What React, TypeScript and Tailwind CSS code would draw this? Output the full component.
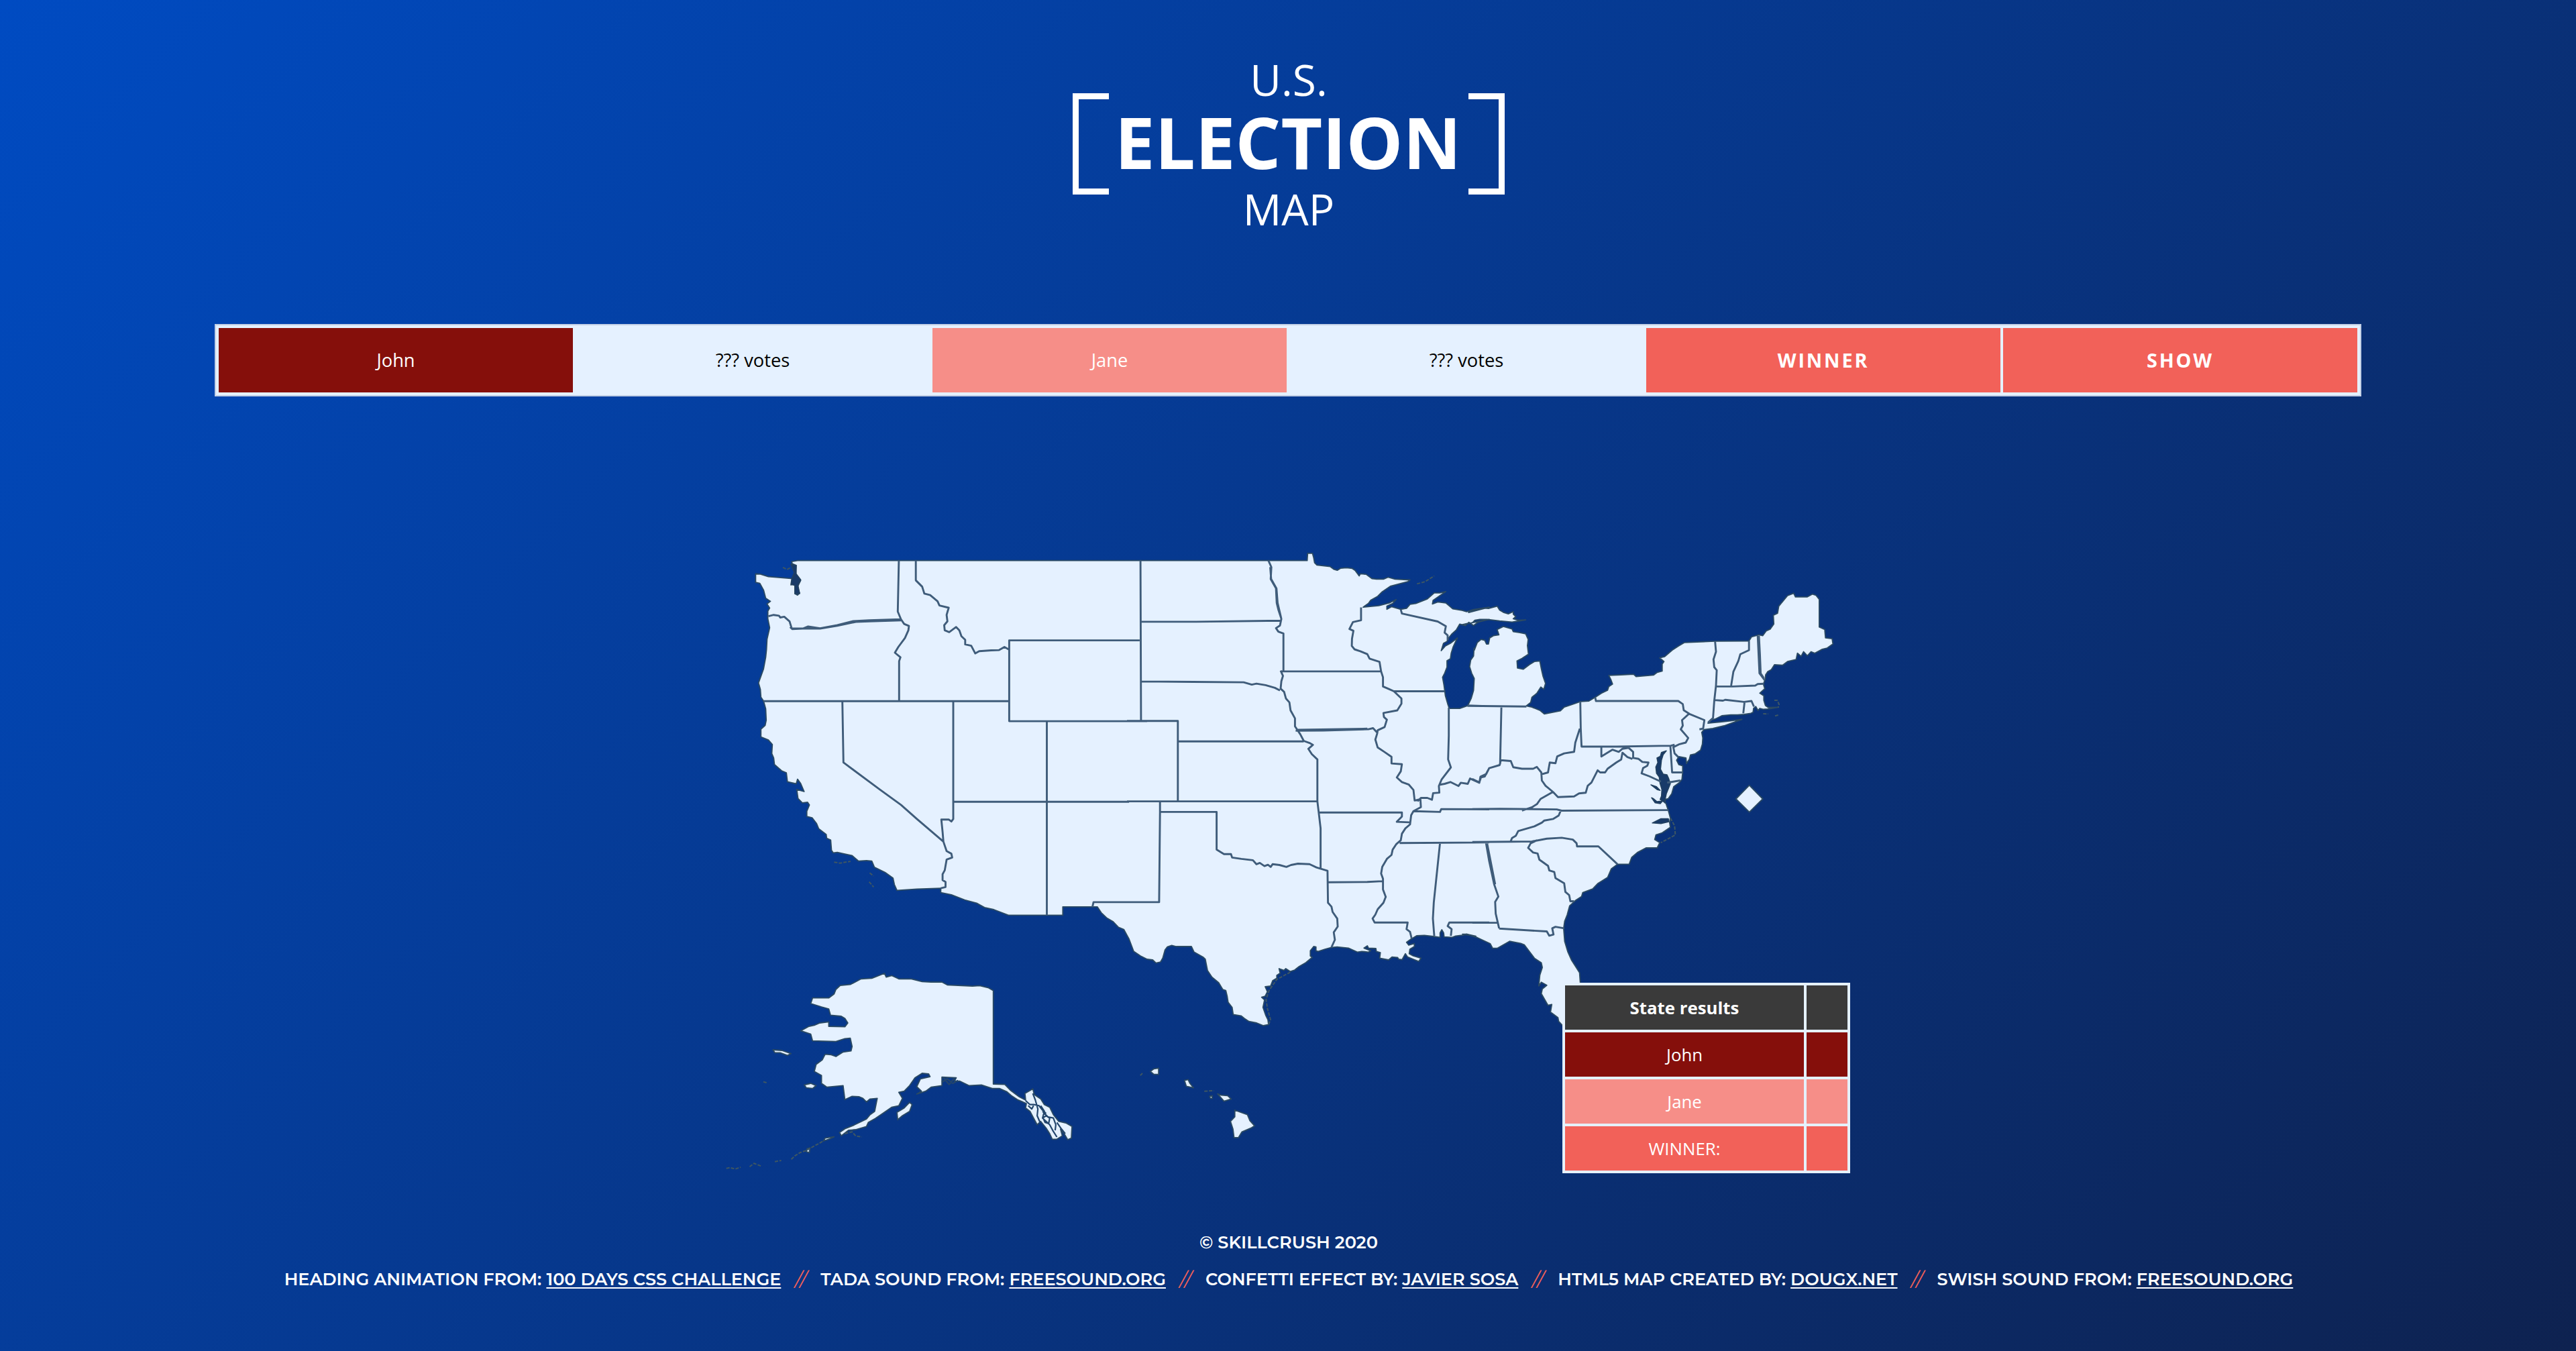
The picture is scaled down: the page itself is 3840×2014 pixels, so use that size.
import React from "react";

type Sheet = [number, number, number, number];

// Each sheet of the map has its own origin and scale: [x, y, x scale, y scale].
const WEST: Sheet = [1090, 800, 620 / 1568, 600 / 1568];
const MID: Sheet = [1680, 800, 540 / 1568, 620 / 1568];
const EAST: Sheet = [2180, 820, 580 / 1568, 720 / 1568];
const ISLES: Sheet = [1080, 1400, 840 / 1568, 1 / 3];
const GULF: Sheet = [1690, 1330, 1 / 3, 1 / 3];
const NORTHEAST: Sheet = [2380, 920, 1 / 3, 1 / 3];

function project([ox, oy, sx, sy]: Sheet, points: string): string {
  return points
    .trim()
    .split(/\s+/)
    .map((p) => {
      const [x, y] = p.split(",").map(Number);
      return `${(ox + x * sx).toFixed(1)},${(oy + y * sy).toFixed(1)}`;
    })
    .join(" ");
}

const mainland = [
  project(WEST, "228,97 250,93 1540,93"),
  project(
    MID,
    "60,90 780,90 782,63 803,63 808,80 812,98 822,107 880,113 895,123 910,127 925,119 950,117 975,120 988,128 1005,148 1010,140 1035,142 1060,158 1080,160 1110,160 1130,153 1160,160 1225,163 1215,170 1140,187 1105,208 1085,225 1055,240 1045,252 1022,266 1090,260 1135,250 1165,237 1150,252 1125,262 1125,274 1145,264 1185,274 1210,270 1225,255 1250,252 1300,235 1330,212 1355,212 1380,207 1345,228 1325,240 1322,254 1345,246 1380,250 1410,272 1450,278 1470,283 1500,275 1568,266",
  ),
  project(
    EAST,
    "25,203 30,197 60,192 85,188 105,190 140,182 150,195 165,202 185,207 205,200 205,208 215,216 205,223 225,228 255,227 215,232 200,234 150,230 100,225 70,225 50,228 40,236 20,238 0,242",
  ),
  project(
    MID,
    "1568,312 1540,318 1520,322 1500,335 1480,323 1465,335 1440,330 1425,352 1405,368 1392,382 1385,395 1370,402 1360,430 1378,412 1400,402 1430,382 1412,415 1403,440 1400,460 1385,468 1385,492 1375,515 1366,530 1372,560 1378,600 1388,630 1395,648 1440,648 1475,637 1490,610 1500,580 1503,535 1492,515 1483,490 1488,465 1500,450 1502,420",
  ),
  project(
    EAST,
    "48,325 60,300 75,290 90,293 97,305 105,305 110,285 125,278 147,275 140,258 165,248 200,256 205,265 232,268 255,272 265,290 262,310 266,338 240,352 220,360 222,383 245,387 270,372 290,362 312,360 318,385 325,410 335,433 328,452 316,445 300,465 280,478 275,495 258,506 280,510 312,520 330,532 395,522 410,510 440,502 475,492 510,490 535,478 560,465 585,455 590,443 605,435 598,420 590,407 640,405 690,403 700,411 770,406 785,397 805,393 805,370 812,362 795,350 815,346 845,325 870,312 895,300 1018,296 1155,295 1165,282 1195,275 1210,278 1225,262 1240,257 1255,240 1253,212 1270,205 1275,182 1310,148 1335,140 1342,152 1390,152 1410,143 1425,147 1438,160 1438,250 1460,258 1463,285 1490,288 1493,305 1470,318 1450,322 1420,335 1405,330 1390,343 1375,330 1365,345 1350,335 1345,355 1310,362 1290,374 1258,372 1245,388 1230,395 1222,405 1220,420",
  ),
  project(
    NORTHEAST,
    "752,282 746,300 752,320 730,340 748,352 748,372 755,395 768,404 812,403 765,411 745,412 730,408 722,418 712,400 702,408 700,425 690,430 660,435 630,437 600,437 560,441 530,456 510,460 498,474 520,472 560,468 600,464 650,457 615,470 570,486 520,498 480,503 470,515 475,540 473,568 465,595 440,612 420,616 415,635 402,655 400,630 368,624 358,640 368,660 385,665 385,695 382,725 370,740 345,758 336,790 320,812 308,815 305,830",
  ),
  project(
    EAST,
    "820,822 830,846 838,870 835,885 838,900 805,918 780,925 775,940 795,950 785,967 740,967 705,982 682,998 672,1020 625,1020 600,1035 585,1063 545,1083 525,1100 485,1112 480,1125 455,1138 432,1155 422,1185 412,1205 408,1228 412,1270 425,1305 440,1332 472,1372 475,1405 475,1560 425,1560 403,1543 388,1530 385,1518 355,1500 360,1475 345,1478 318,1440 322,1425 340,1413 318,1403 308,1415 312,1380 322,1355 318,1340 290,1325 250,1282 235,1277 190,1270 140,1293 122,1293 112,1278 60,1258 15,1247 0,1247",
  ),
  project(
    GULF,
    "1530,197 1500,190 1488,187 1475,192 1440,196 1424,202 1388,200 1386,182 1378,168 1370,182 1370,202 1340,198 1300,193 1265,195 1240,210 1220,224 1230,237 1255,230 1255,243 1235,255 1232,275 1250,285 1285,295 1275,310 1250,300 1225,290 1215,275 1200,302 1185,300 1180,292 1155,290 1140,303 1100,295 1103,270 1085,265 1083,252 1050,250 1045,240 1030,250 1060,262 1050,268 1020,265 1000,268 960,250 910,245 885,247 855,255 825,265 815,262 815,245 805,243 790,262 790,285 798,292 770,315 740,332 720,348 700,355 680,342 672,350 650,342 655,362 640,372 640,385 622,395 612,420 588,423 598,445 588,465 572,470 585,482 578,515 590,550 600,570 603,592 580,597 550,585 515,578 495,565 480,553 445,547 440,515 422,492 418,465 412,440 398,435 380,405 350,380 330,350 320,300 310,290 270,268 258,243 190,243 170,238 150,245 140,258 130,295 120,312 100,317 85,303 60,300 30,285 0,265",
  ),
  project(
    WEST,
    "1500,1568 1480,1530 1460,1522 1440,1500 1415,1485 1395,1465 1380,1442 1250,1442 1250,1475 1190,1475 1045,1475 990,1453 955,1445 925,1428 880,1415 830,1395 790,1387 790,1370 700,1373 625,1378 615,1355 610,1330 580,1308 540,1288 530,1264 510,1262 480,1264 455,1242 400,1230 385,1232 378,1222 375,1182 360,1175 358,1160 330,1138 322,1118 305,1095 285,1090 285,1070 295,1045 288,1035 268,1037 252,1020 247,985 275,993 262,962 250,945 245,963 212,955 208,920 190,912 163,888 160,862 153,845 155,810 140,792 112,780 112,750 128,735 132,715 130,670 122,640 112,625 110,595 103,570 122,515 130,470 133,440 135,400 145,355 138,320 138,290 145,278 135,262 148,252 130,240 122,208 108,182 92,178 92,145 110,146 140,156 225,163 240,165 225,188 240,185 240,222 250,228 258,220 250,195 262,170 242,145 245,112 230,105",
  ),
];

const MAINLAND_PATH = `M${mainland.join(" ")}Z`;

const alaska = [
  "445,153 450,170 465,163 485,178 520,178 550,190 575,192 605,192 620,205 690,210 710,208 735,218 748,230 748,648 780,650 795,675 820,705 838,720 836,690 858,670 862,695 880,715 890,740 905,752 915,785 930,815 950,822 967,838 965,890 955,897 945,870 935,850 940,880 925,895 912,895 905,870 895,845 880,815 870,830 860,800 850,770 838,755 840,735 815,718 798,700 785,682 765,668 745,668 715,652 680,655 655,635 640,635 645,620 605,617 605,655 575,662 560,680 535,693 548,680 535,660 545,625 572,615 568,603 550,600 530,620 515,655 500,680 485,685 495,712 485,745 465,752 440,780 420,802 400,820 395,838 365,852 345,855 325,880 320,865 335,848 360,832 395,805 405,785 418,770 425,712 405,715 395,728 385,712 375,705 355,703 335,718 330,655 285,662 270,645 270,610 250,592 255,560 272,540 280,515 297,517 310,525 330,505 352,500 355,480 350,443 335,445 310,458 245,455 240,425 212,410 235,390 250,385 265,375 290,370 290,390 335,392 343,375 335,355 325,345 295,340 290,312 270,303 240,288 245,263 290,263 305,245 310,225 322,207 350,203 380,178 410,175",
  "135,495 160,498 185,512 175,520 155,508 140,508",
  "222,652 240,645 255,655 245,668 228,665",
  "480,775 500,755 515,730 522,740 515,770 495,790 482,808",
  "275,903 280,890 305,884 295,892",
  "228,950 230,937 238,933 236,955",
];

const hawaii = [
  "1185,592 1195,580 1208,577 1208,605 1195,605",
  "1280,632 1290,628 1295,645 1305,665 1285,658",
  "1350,703 1357,700 1357,712 1352,712",
  "1372,692 1382,698 1400,700 1410,715 1390,725 1383,712",
  "1420,765 1455,785 1462,812 1475,835 1465,845 1440,862 1430,888 1418,888 1415,850 1408,815 1420,795",
];

const ISLAND_PATH = [...alaska, ...hawaii].map((p) => `M${project(ISLES, p)}Z`).join("");

// Channels between the islands of the Alaskan panhandle.
const channels = [
  "838,722 850,740 862,740 875,745 885,765 895,780",
  "858,690 865,720 872,760 870,790 878,820",
  "885,770 900,795 915,800 922,830 920,855",
  "885,800 895,790 905,800 902,825 892,820 888,805",
  "880,745 890,770 885,800 905,830 915,860 925,885",
  "925,820 938,850 948,870",
  "845,745 855,760 860,745",
  "605,640 620,625 635,645 650,632",
  "610,620 625,650 640,622",
];
const CHANNEL_PATH = channels.map((p) => `M${project(ISLES, p)}`).join("");

const specks = [
  project(ISLES, "186,985 195,970 210,955 228,945 250,925 262,915 275,902"),
  project(ISLES, "5,1025 15,1022 30,1028 45,1020"),
  project(ISLES, "70,1018 82,1003 102,1015"),
  project(ISLES, "140,995 158,990"),
  project(ISLES, "335,870 355,862 365,880 382,885"),
  project(ISLES, "1335,680 1362,678"),
  project(ISLES, "108,638 117,642"),
  project(ISLES, "1157,610 1163,600"),
  project(MID, "1255,178 1290,170 1330,148"),
  project(WEST, "388,1268 410,1272 450,1265"),
  project(WEST, "522,1310 537,1322"),
  project(WEST, "520,1345 537,1365"),
  project(WEST, "195,120 210,128 225,120"),
  project(NORTHEAST, "795,372 808,372 816,390 812,405"),
  project(NORTHEAST, "745,432 768,433"),
  project(NORTHEAST, "798,442 812,438"),
  project(EAST, "838,870 855,895 858,925 800,950"),
  project(GULF, "603,592 612,570 598,520 592,480 605,440 640,390 700,358"),
];
const SPECK_PATH = specks.map((p) => `M${p}`).join("");

const borders = [
  // Pacific and Rocky Mountain states
  project(WEST, "632,93 628,292 640,322 652,340 670,348 668,365 655,395 630,430 617,452 638,470 633,485 633,640"),
  project(WEST, "140,310 160,305 180,308 185,315 200,312 220,330 228,358 270,358 290,350 335,357 400,345 430,337 460,329 520,326 640,322"),
  project(WEST, "222,352 230,360 270,358 335,358 400,347 470,332 520,330 640,326"),
  project(WEST, "122,641 1048,641"),
  project(WEST, "696,93 696,170 720,195 728,222 750,228 778,252 785,268 820,277 812,305 815,330 803,345 805,365 822,372 848,352 860,365 868,388 882,402 882,420 905,425 920,455 935,446 980,443 1010,442 1030,430 1048,440"),
  project(WEST, "1540,404 1048,404 1048,719 1568,719"),
  project(WEST, "1543,93 1545,719"),
  project(WEST, "419,641 423,880 560,985 640,1045 700,1100 800,1188"),
  project(WEST, "837,641 837,1100 830,1110 820,1102 792,1102 797,1150 800,1188 812,1225 830,1235 833,1250 812,1258 805,1300 797,1315 797,1338 808,1345 808,1365 790,1370"),
  project(WEST, "1190,719 1190,1475"),
  project(WEST, "837,1033 1500,1033"),
  project(WEST, "1362,1442 1366,1424 1500,1424"),
  // Plains and Mississippi valley
  project(MID, "57,321 300,321 665,317"),
  project(MID, "612,90 625,115 622,160 645,195 648,250 655,275 668,310 662,335 645,345 655,358 677,365 677,505"),
  project(MID, "620,115 624,160 647,195 652,250 668,310"),
  project(MID, "665,508 1100,508"),
  project(MID, "60,546 505,549 540,558 560,554 600,560 640,570 662,580"),
  project(MID, "665,505 675,525 668,545 665,573 680,585 688,610 703,625 708,655 727,685 727,715 750,745 765,770 790,778 805,785 785,800 800,820 824,840 824,998 830,1040 838,1100 838,1250"),
  project(MID, "0,695 220,695 220,998"),
  project(MID, "220,772 765,772"),
  project(MID, "0,998 824,998"),
  project(MID, "143,998 143,1038 388,1038 388,1180 420,1197 450,1197 455,1210 495,1215 545,1220 560,1235 575,1230 595,1242 610,1237 622,1245 630,1235 660,1238 690,1245 710,1238 740,1233 790,1235 820,1247 868,1260 870,1380 885,1395 890,1415 910,1440 912,1470 895,1492 900,1520 885,1548"),
  project(MID, "143,1038 139,1378 0,1378"),
  project(MID, "730,732 850,731 1045,726 1065,722 1082,738"),
  project(MID, "740,728 1040,724"),
  project(MID, "828,1040 1190,1040 1190,1055 1168,1075 1222,1077"),
  project(MID, "870,1303 1040,1302 1105,1299"),
  project(MID, "1013,267 1013,315 978,322 963,348 980,355 974,385 973,412 985,425 1010,432 1040,443 1050,460 1093,472 1100,508 1108,530 1108,565 1135,575 1155,583 1188,610 1188,630 1170,655 1110,665 1112,680 1125,690 1115,718 1085,730 1083,742 1075,765 1085,795 1115,812 1145,830 1145,855 1190,858 1185,885 1168,908 1190,925 1220,935 1240,955 1245,995 1270,990 1272,1020 1240,1035 1230,1050 1225,1085 1205,1100 1190,1120 1185,1145 1165,1160 1150,1180 1145,1200 1125,1215 1105,1245 1100,1270 1108,1290 1108,1330 1120,1358 1110,1380 1085,1405 1075,1425 1063,1440 1072,1455 1215,1455 1210,1480 1225,1490 1232,1515"),
  project(MID, "1155,583 1375,583"),
  project(MID, "1185,275 1190,290 1345,320 1365,330 1380,338 1375,362 1388,372 1388,390"),
  project(MID, "1393,645 1393,750 1390,840 1402,870 1362,915 1350,940 1352,965 1325,967 1320,992 1300,985 1272,985 1258,998"),
  project(MID, "1355,935 1375,932 1400,925 1435,940 1445,928 1475,932 1485,912 1525,928 1530,905 1555,895 1568,872"),
  project(MID, "1475,637 1568,639"),
  project(MID, "1240,1035 1355,1038 1360,1027 1568,1028"),
  project(MID, "1180,1155 1568,1153"),
  project(MID, "1355,1155 1328,1380 1324,1440 1330,1505"),
  project(MID, "1568,1455 1395,1455 1388,1468 1405,1480 1402,1505"),
  // Great Lakes, Appalachia and the South
  project(EAST, "20,506 258,508"),
  project(EAST, "157,508 152,695"),
  project(EAST, "40,743 68,754 75,738 90,735 108,708 150,698 155,682 195,685 205,705 240,710 285,710 300,704 318,722 320,748 335,765 365,785"),
  project(EAST, "318,728 345,722 352,690 375,692 382,670 410,660 450,655 455,625 473,580"),
  project(EAST, "475,492 477,580 480,638 620,638 840,635 855,632"),
  project(EAST, "535,478 538,490 870,490 888,500 892,520 915,532 975,552 970,580 955,582"),
  project(EAST, "915,530 885,552 888,570 880,582 910,610 900,625 875,630 850,640 855,660 870,672"),
  project(EAST, "1018,296 1022,330 1012,355 1015,380 1025,390 1022,440 1015,490 1010,545 990,560"),
  project(EAST, "1155,295 1155,325 1120,338 1112,360 1092,395 1083,440"),
  project(EAST, "1190,278 1197,400 1218,422"),
  project(EAST, "1195,278 1199,340 1202,400 1215,416"),
  project(EAST, "1022,443 1090,443 1180,440 1190,435 1215,434"),
  project(EAST, "1015,487 1050,489 1060,486 1135,493 1165,490 1175,508"),
  project(EAST, "1137,493 1132,530"),
  project(EAST, "560,638 560,670 585,658 605,648 630,655 645,645 670,642 688,655 688,675 710,678 725,688 750,690 745,700 728,708 722,725 755,735 800,752"),
  project(EAST, "365,785 385,802 450,800 470,790 497,788 505,765 520,755 545,715 555,722 575,722 585,710 620,690 640,680 645,658 665,672 685,678"),
  project(EAST, "365,785 315,808 300,825 280,835 240,846"),
  project(EAST, "40,841 150,840 380,842 400,846 830,844"),
  project(EAST, "395,848 388,862 365,873 330,878 320,885 290,897 225,912 215,928 200,935 195,945"),
  project(EAST, "40,948 200,947 280,946 340,937 400,934 445,940 460,952 462,962 548,962 625,1020"),
  project(EAST, "300,942 275,952 265,967 285,982 303,985 310,1005 345,1025 350,1040 370,1045 375,1065 410,1082 415,1110 430,1120 435,1140 450,1140"),
  project(EAST, "95,950 108,1010 128,1085 145,1125 132,1142 134,1180 148,1228"),
  project(EAST, "99,950 132,1085"),
  project(EAST, "40,1210 140,1210"),
  project(EAST, "148,1229 340,1238 350,1252 367,1248 362,1228 375,1223 410,1228"),
  project(EAST, "838,636 845,722 888,722"),
  project(EAST, "825,755 878,748"),
];
const BORDER_PATH = borders.map((p) => `M${p}`).join("");

// Inlets cut into the land: Chesapeake Bay, Puget Sound, Pamlico and Long Island sounds.
const inlets = [
  project(NORTHEAST, "312,598 290,605 285,622 270,630 274,650 265,670 268,698 280,715 284,745 292,770 290,800 284,815 304,828 312,790 330,745 322,720 315,705 298,702 286,680 290,640 298,615"),
  project(NORTHEAST, "243,750 268,758 284,775 272,772"),
  project(NORTHEAST, "246,808 255,812 270,825 295,822 285,834 262,830"),
  project(EAST, "765,886 800,872 830,872 832,882 800,888"),
  project(WEST, "225,108 245,112 245,145 262,168 252,190 258,222 240,222 240,190 225,185 228,165 238,140"),
];
const INLET_PATH = inlets.map((p) => `M${p}Z`).join("");

const DIAMOND_PATH = `M${project(NORTHEAST, "683,752 743,813 683,872 623,813")}Z`;

function ElectoralMap() {
  return (
    <svg className="block h-[950px] w-[1700px]" viewBox="1070 810 1700 950" strokeLinejoin="round">
      <g fill="#e5f1ff" stroke="#2b4a63" strokeWidth="1.8">
        <path d={MAINLAND_PATH} />
        <path d={ISLAND_PATH} />
        <path d={DIAMOND_PATH} />
      </g>
      <path d={INLET_PATH} fill="#183a69" stroke="#23415f" strokeWidth="1.5" />
      <path d={CHANNEL_PATH} fill="none" stroke="#23456b" strokeWidth="2.2" />
      <path d={BORDER_PATH} fill="none" stroke="#3f5c7a" strokeWidth="2.9" />
      <path d={SPECK_PATH} fill="none" stroke="#3d5664" strokeWidth="2" strokeDasharray="5 2" />
    </svg>
  );
}

function Bracket({ side }: { side: "left" | "right" }) {
  return (
    <span
      className={
        side === "left"
          ? "h-full w-[54px] border-y-[9px] border-l-[9px] border-white"
          : "h-full w-[54px] border-y-[9px] border-r-[9px] border-white"
      }
    />
  );
}

function Heading() {
  return (
    <h1 className="flex flex-col items-center pt-[87px] pl-[2px] text-[64px] leading-[64px] text-white">
      <span className="-mb-[12px]">U.S.</span>
      <span className="flex h-[151px] w-[644px] items-center justify-between">
        <Bracket side="left" />
        <strong className="pr-[2px] pb-2 text-[106.7px] leading-[100px] font-bold">ELECTION</strong>
        <Bracket side="right" />
      </span>
      <span className="-mt-[10px]">MAP</span>
    </h1>
  );
}

function Scoreboard() {
  return (
    <section className="mt-[139px] grid h-[108px] w-[3200px] grid-cols-6 gap-1 border-2 border-[#c3d0e6] bg-[#e5f1ff] p-1 text-center text-[27.3px] leading-[96px]">
      <div className="bg-[#850f0b] text-white">John</div>
      <div className="text-black">??? votes</div>
      <div className="bg-[#f68e88] text-white">Jane</div>
      <div className="text-black">??? votes</div>
      <button className="bg-[#f26159] text-[28.8px] font-bold tracking-[2.88px] text-white">WINNER</button>
      <button className="bg-[#f26159] text-[28.8px] font-bold tracking-[2.88px] text-white">SHOW</button>
    </section>
  );
}

const results = [
  { label: "State results", style: "h-[66px] bg-[#3a3a3a] font-bold" },
  { label: "John", style: "h-[66px] bg-[#850f0b]" },
  { label: "Jane", style: "h-[66px] bg-[#f68e88]" },
  { label: "WINNER:", style: "h-[66px] bg-[#f26159]" },
];

function StateResults() {
  return (
    <div className="absolute top-[655px] left-[1259px] grid w-[429px] grid-cols-[356px_61px] gap-1 bg-[#e5f1ff] p-1 text-center text-[25.8px] leading-[66px] text-white">
      {results.map(({ label, style }) => (
        <React.Fragment key={label}>
          <div className={style}>{label}</div>
          <div className={style} />
        </React.Fragment>
      ))}
    </div>
  );
}

const credits = [
  { text: "HEADING ANIMATION FROM:", link: "100 DAYS CSS CHALLENGE" },
  { text: "TADA SOUND FROM:", link: "FREESOUND.ORG" },
  { text: "CONFETTI EFFECT BY:", link: "JAVIER SOSA" },
  { text: "HTML5 MAP CREATED BY:", link: "DOUGX.NET" },
  { text: "SWISH SOUND FROM:", link: "FREESOUND.ORG" },
];

function Footer() {
  return (
    <footer className="mt-[77px] flex flex-col items-center gap-[25px] pl-[2px] text-[25.6px] leading-[30px] font-semibold whitespace-nowrap text-white [font-family:Montserrat,Inter,sans-serif]">
      <p>© SKILLCRUSH 2020</p>
      <p className="flex text-[25.52px]">
        {credits.map(({ text, link }, i) => (
          <React.Fragment key={text}>
            {i > 0 && <span className="w-[59px] text-center text-[28px] font-normal text-[#f26159] italic">//</span>}
            <span>
              {text}{" "}
              <a className="underline decoration-2 underline-offset-[3px] [text-decoration-skip-ink:none]">{link}</a>
            </span>
          </React.Fragment>
        ))}
      </p>
    </footer>
  );
}

export default function App() {
  return (
    <main className="flex h-[2014px] w-[3840px] flex-col items-center overflow-hidden bg-[linear-gradient(135deg,#004bc2_0%,#0e2250_100%)] [font-family:'Open_Sans',sans-serif]">
      <Heading />
      <Scoreboard />
      <div className="relative mt-[219px]">
        <ElectoralMap />
        <StateResults />
      </div>
      <Footer />
    </main>
  );
}
